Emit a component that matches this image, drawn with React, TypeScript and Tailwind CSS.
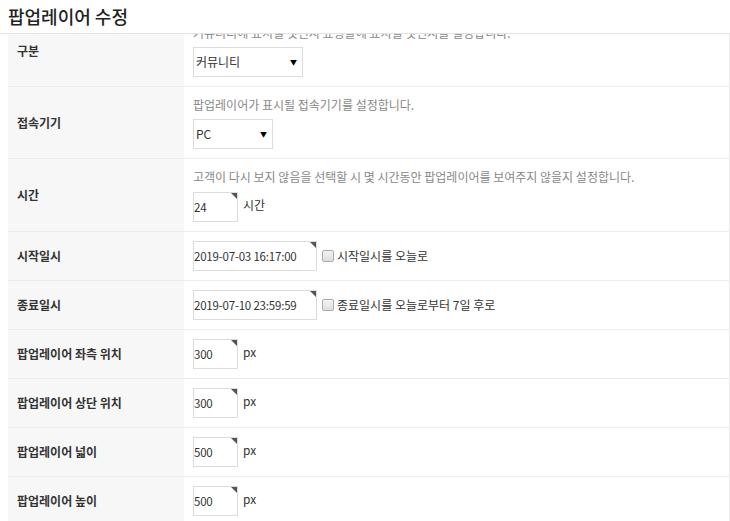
import React from "react";

const font = { fontFamily: '"Noto Sans CJK KR", "Noto Sans", sans-serif' };

function Corner() {
  return (
    <span className="absolute right-0 top-0 h-0 w-0 border-l-[6px] border-t-[6px] border-l-transparent border-t-[#555]" />
  );
}

function TextBox({ value, w }: { value: string; w: string }) {
  return (
    <div className={`relative flex h-[30px] items-center border border-[#dcdcdc] bg-white pl-0 text-[11.5px] leading-none text-[#333] ${w}`}>
      <span className="mt-[1px] tracking-[-0.2px]">{value}</span>
      <Corner />
    </div>
  );
}

function SelectBox({ value, w }: { value: string; w: string }) {
  return (
    <div className={`flex h-[30px] items-center justify-between border border-[#dcdcdc] bg-white pl-[2px] pr-[5px] text-[12px] leading-none text-[#333] ${w}`}>
      <span>{value}</span>
      <span className="text-[7px] text-black">▼</span>
    </div>
  );
}

function Check({ label }: { label: string }) {
  return (
    <div className="ml-[5px] flex items-center gap-[3px]">
      <span className="h-[12px] w-[12px] rounded-[2px] border border-[#aaa] bg-gradient-to-b from-[#f4f4f4] to-[#dedede]" />
      <span className="text-[12px] leading-none text-[#333]">{label}</span>
    </div>
  );
}

function Row({ label, children, last }: { label: string; children: React.ReactNode; last?: boolean }) {
  return (
    <div className={`flex ${last ? "" : "border-b border-[#ececec]"}`}>
      <div className="flex w-[176px] shrink-0 items-center bg-[#f7f7f7] pl-[9px] text-[12px] font-bold text-[#333]">
        {label}
      </div>
      <div className="flex-1 pb-[9px] pl-[9px] pt-[9px]">{children}</div>
    </div>
  );
}

function Desc({ children, extra }: { children: React.ReactNode; extra?: boolean }) {
  return (
    <div className={`${extra ? "mb-[6px]" : "mb-[5px]"} h-[18px] text-[12px] leading-[18px] text-[#888]`}>
      {children}
    </div>
  );
}

function Unit({ value, unit }: { value: string; unit: string }) {
  return (
    <div className="flex items-center">
      <TextBox value={value} w="w-[45px]" />
      <span className="ml-[5px] -mt-[4px] text-[12px] text-[#333]">{unit}</span>
    </div>
  );
}

export default function App() {
  return (
    <div className="h-[521px] w-[730px] overflow-hidden bg-white" style={font}>
      <div className="relative z-10 flex h-[34px] items-start border-b border-[#e3e3e3] bg-white pl-[8px]">
        <h1 className="mt-[1px] text-[18px] font-medium leading-[30px] text-[#222]">팝업레이어 수정</h1>
      </div>
      <div className="h-[487px] overflow-hidden pl-[8px]">
        <div className="-mt-[19px] border-r border-[#ececec]">
          <Row label="구분">
            <Desc>커뮤니티에 표시될 것인지 쇼핑몰에 표시될 것인지를 설정합니다.</Desc>
            <SelectBox value="커뮤니티" w="w-[110px]" />
          </Row>
          <Row label="접속기기">
            <Desc>팝업레이어가 표시될 접속기기를 설정합니다.</Desc>
            <SelectBox value="PC" w="w-[80px]" />
          </Row>
          <Row label="시간">
            <Desc extra>고객이 다시 보지 않음을 선택할 시 몇 시간동안 팝업레이어를 보여주지 않을지 설정합니다.</Desc>
            <Unit value="24" unit="시간" />
          </Row>
          <Row label="시작일시">
            <div className="flex items-center">
              <TextBox value="2019-07-03 16:17:00" w="w-[124px]" />
              <Check label="시작일시를 오늘로" />
            </div>
          </Row>
          <Row label="종료일시">
            <div className="flex items-center">
              <TextBox value="2019-07-10 23:59:59" w="w-[124px]" />
              <Check label="종료일시를 오늘로부터 7일 후로" />
            </div>
          </Row>
          <Row label="팝업레이어 좌측 위치">
            <Unit value="300" unit="px" />
          </Row>
          <Row label="팝업레이어 상단 위치">
            <Unit value="300" unit="px" />
          </Row>
          <Row label="팝업레이어 넓이">
            <Unit value="500" unit="px" />
          </Row>
          <Row label="팝업레이어 높이">
            <Unit value="500" unit="px" />
          </Row>
          <Row label="팝업레이어 내용" last>
            <div className="h-[60px]" />
          </Row>
        </div>
      </div>
    </div>
  );
}
